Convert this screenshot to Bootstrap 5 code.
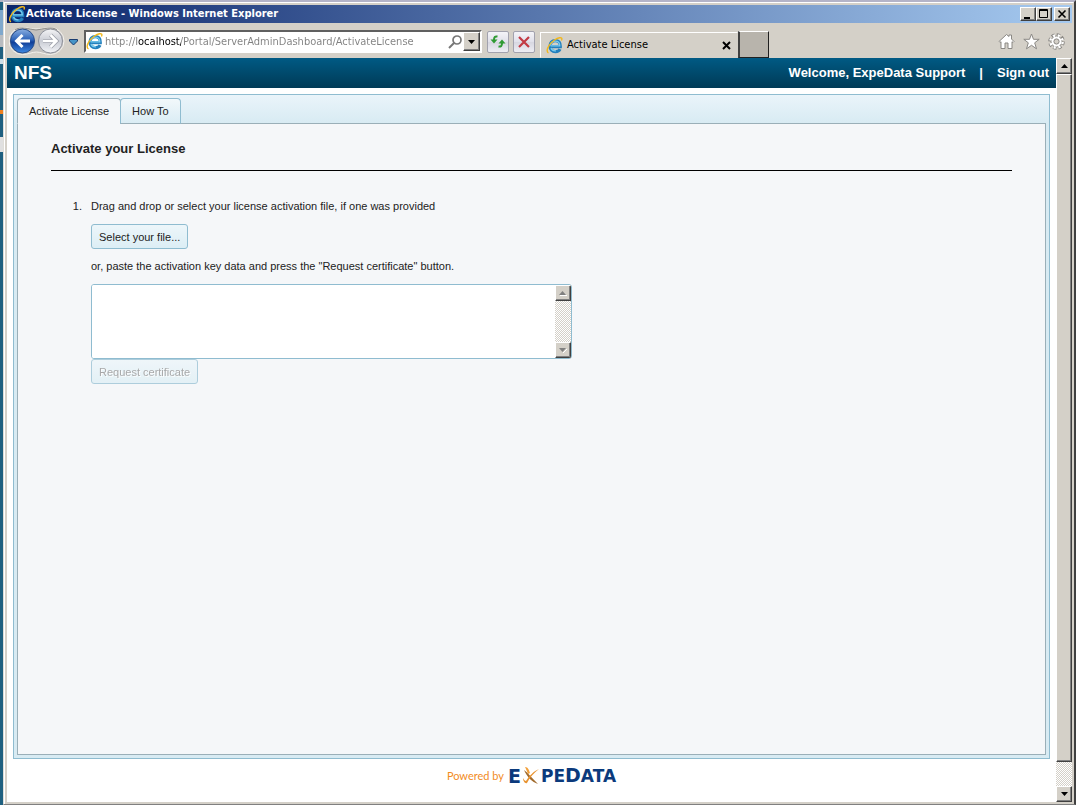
<!DOCTYPE html>
<html lang="en">
<head>
<meta charset="utf-8">
<meta name="viewport" content="width=device-width, initial-scale=1">
<title>Activate License</title>
<link href="https://cdn.jsdelivr.net/npm/bootstrap@5.3.0/dist/css/bootstrap.min.css" rel="stylesheet">
<script src="https://cdn.jsdelivr.net/npm/bootstrap@5.3.0/dist/js/bootstrap.bundle.min.js"></script>
<style>
  :root { --face: #d4d0c8; --line: #8fbcd0; --edge: #9aafb8; }
  body { font: 11px/16px "Liberation Sans", Arial, sans-serif; color: #222; background: var(--face); }
  button { padding: 0; border: 0; color: inherit; }
  svg { display: block; flex: none; }
  .desk { width: 3px; background: linear-gradient(#b4b4c4 2px, #1f6080 2px 10px, #7fa8cc 10px 35px, #b8bcc0 35px 47px, #1f6080 47px 59px, #cfe0e8 59px 64px, #1f6080 64px 110px, #f08020 110px 114px, #1f6080 114px 137px, #e0e0e0 137px 152px, #1f6080 152px); }
  .frame { border: solid; border-width: 2px 2px 1px 1px; border-color: #b4b4c8 #404040 #808080 #e0ded8; }
  .rim { border: solid; border-width: 1px 1px 0 1px; border-color: #fff var(--face) #808080 #fff; padding: 2px 1px 2px 2px; }
  .ui { font-family: "DejaVu Sans Condensed", "DejaVu Sans", sans-serif; font-stretch: condensed; }
  .titlebar { height: 18px; background: linear-gradient(90deg, #0a246a, #a6caf0); color: #fff; font-weight: bold; padding: 0 2px 0 1px; }
  .raised { background: var(--face); border: 1px solid; border-color: #fff #404040 #404040 #fff; box-shadow: inset -1px -1px #808080; }
  .winbtn { width: 16px; height: 14px; }
  .winclose { margin-left: 2px; }
  .toolbar { height: 35px; padding: 2px 7px 0 2px; }
  .address { width: 398px; height: 23px; background: #fff; border: 2px solid; border-color: #606060 #fff #fff #606060; }
  .url { border: 0; outline: 0; padding: 0 0 0 2px; height: 18px; color: transparent; background: linear-gradient(90deg, #808080 34px, #000 34px 78px, #808080 78px); -webkit-background-clip: text; background-clip: text; }
  .glass { width: 22px; height: 22px; border: 1px solid #a2a2ae; border-radius: 2px; background: linear-gradient(#f4f4f8, #e0e0ea 50%, #d6d6e0 50%, #eeeef4); }
  .spaced { margin-left: 5px; }
  .pagetab { width: 198px; height: 26px; border: 1px solid; border-color: #fff transparent transparent #fff; padding: 0 6px 0 5px; }
  .newtab { width: 31px; height: 27px; background: #b8b4ac; border: solid; border-width: 1px 1px 1px 2px; border-color: #fff #202020 #202020 #404040; }
  .banner { height: 30px; background: linear-gradient(#005a84, #003a56); color: #fff; font-weight: bold; padding: 0 7px; font-size: 13px; }
  .banner a { color: #fff; text-decoration: none; }
  .divider { padding: 0 14px; }
  .brand { font-size: 19px; margin: 0; font-weight: bold; line-height: 30px; }
  .dither { background: repeating-conic-gradient(#d4d0c8 0 25%, #fff 0 50%) 0 0 / 2px 2px; }
  .vbar { width: 16px; }
  .vbar button { height: 16px; flex: none; }
  .outer { margin: 6px 6px 0; border: 1px solid var(--line); background: linear-gradient(#eaf4fa, #d8ebf3 28px); padding: 3px; }
  .tabs { height: 26px; margin-bottom: -1px; position: relative; }
  .tabs button { height: 26px; border: 1px solid var(--line); border-radius: 4px 4px 0 0; background: linear-gradient(#f2f8fb, #daecf4); padding: 0 11px; }
  .tabs .active { background: #f5f7f9; border-color: var(--edge); border-bottom-color: #f5f7f9; }
  .tabs button + button { margin-left: -1px; border-bottom-color: var(--edge); }
  .panel { border: 1px solid var(--edge); background: #f5f7f9; padding: 17px 33px; }
  .panel h1 { font-size: 13px; line-height: 16px; font-weight: bold; margin: 0; padding-bottom: 13px; border-bottom: 1px solid #000; }
  .steps { margin: 27px 0 0; padding-left: 34px; }
  .steps li { padding-left: 6px; }
  .steps label { display: block; }
  .picker { margin: 10px 0 9px; }
  .soft { height: 25px; padding: 0 7px; border: 1px solid var(--line); border-radius: 3px; background: linear-gradient(#edf6fa, #dceef5); }
  .soft:disabled { opacity: .7; color: #888; text-shadow: 1px 1px #fff; }
  .keybox { max-width: 481px; height: 75px; margin-top: 10px; border: 1px solid var(--line); border-radius: 3px; background: #fff; overflow: hidden; }
  .keybox textarea { border: 0; outline: 0; resize: none; background: #fff; min-width: 0; }
  .foot { height: 43px; padding-bottom: 10px; }
  .powered { color: #f28c1e; font: 11px/16px Lato, sans-serif; }
  .logo { color: #0b3a7c; font: bold 17px/18px "DejaVu Sans", sans-serif; }
  .logo span { font-size: 19px; }
</style>
</head>
<body>
<svg width="0" height="0" class="position-absolute">
  <symbol id="ie" viewBox="0 0 17 17">
    <path d="M4.500 9.600H14.300C14.600 5.500 12.500 3.600 9.300 3.600S4 6 4 9.200s2.200 5.400 5.400 5.400c2.300 0 3.900-.9 4.600-2.500" fill="none" stroke="#2480bd" stroke-width="3.200"/>
    <path d="M4.600 8.900H13.800C13.800 5.700 12 4.100 9.300 4.100S4.800 5.900 4.500 8.500M5 11c1 2.500 3.500 3 5 2.800" fill="none" stroke="#7accef" stroke-width="1.300"/>
    <path d="M2.500 15.800C-.8 14.500 2.500 7 8.500 3 12 .7 15.800-.1 15.900 1.700c0 .6-.2 1.200-.5 1.800" fill="none" stroke="#f2b81c" stroke-width="1.400"/>
  </symbol>
</svg>
<div class="d-flex min-vh-100">
  <div class="desk"></div>
  <div class="frame flex-grow-1 d-flex">
  <div class="rim flex-grow-1 d-flex flex-column">
    <header class="ui">
      <div class="titlebar d-flex align-items-center">
        <svg width="18" height="17"><use href="#ie"/></svg>
        <span class="flex-grow-1">Activate License - Windows Internet Explorer</span>
        <button class="raised winbtn" aria-label="Minimize"><svg width="14" height="12"><path d="M3 9h6v2H3z"/></svg></button>
        <button class="raised winbtn" aria-label="Maximize"><svg width="14" height="12"><path d="M2.500 1.500h8v8h-8zM2 2.500h9" fill="none" stroke="#000"/></svg></button>
        <button class="raised winbtn winclose" aria-label="Close"><svg width="14" height="12"><path d="M3.500 2.500l7 7M10.500 2.500l-7 7" stroke="#000" stroke-width="1.600"/></svg></button>
      </div>
      <div class="toolbar d-flex align-items-center">
        <svg width="56" height="30" viewBox="0 1 56 30">
          <defs>
            <linearGradient id="bl" x2="0" y2="1"><stop offset="0" stop-color="#8aaee0"/><stop offset=".45" stop-color="#2c62b8"/><stop offset=".55" stop-color="#103e98"/><stop offset="1" stop-color="#3e8ae4"/></linearGradient>
            <linearGradient id="gr" x2="0" y2="1"><stop offset="0" stop-color="#f4f4f6"/><stop offset=".5" stop-color="#c9ccd4"/><stop offset="1" stop-color="#f4f5f8"/></linearGradient>
          </defs>
          <path d="M13.500 1.500C18 1.500 20 3 27 3s10-1.500 14.500-1.500a13.500 13.500 0 0 1 0 27C36 28.500 32 26 27.500 26S19 28.500 13.500 28.500a13.500 13.500 0 0 1 0-27z" fill="#c4c2bf" stroke="#f4f2ee"/>
          <path d="M6 4c5-4 13-1 21 0 8-1 16-4 21 0" fill="none" stroke="#8c8a86"/>
          <circle cx="13.500" cy="15" r="12" fill="url(#bl)" stroke="#284c88"/>
          <circle cx="41.500" cy="15" r="12" fill="url(#gr)" stroke="#8d909a"/>
          <path d="M21 15H8M13.500 9L7.500 15l6 6" fill="none" stroke="#fff" stroke-width="3"/>
          <path d="M34 15h13M41.500 9l6 6-6 6" fill="none" stroke="#9b9ea8" stroke-width="4"/>
          <path d="M34 15h13M41.500 9l6 6-6 6" fill="none" stroke="#fff" stroke-width="2.500"/>
        </svg>
        <button class="bg-transparent ms-1" aria-label="Recent pages"><svg width="10" height="8"><path d="M.5 1.500h8v1.500L4.500 7 .5 3z" fill="#4795c8" stroke="#1a3c70"/></svg></button>
        <div class="address spaced d-flex align-items-center">
          <svg width="17" height="17"><use href="#ie"/></svg>
          <input class="url ui flex-grow-1" type="text" aria-label="Address" value="http://localhost/Portal/ServerAdminDashboard/ActivateLicense">
          <svg width="15" height="15"><circle cx="9" cy="6" r="4" fill="none" stroke="#777" stroke-width="1.700"/><path d="M6 9l-5 5" stroke="#777" stroke-width="2"/></svg>
          <button class="raised h-100 px-1" aria-label="Show addresses"><svg width="7" height="4"><path d="M0 0h7L3.500 4z"/></svg></button>
        </div>
        <button class="glass spaced me-1" aria-label="Refresh"><svg width="20" height="20"><path d="M9.500 4.500C7 4 6 5 6 8M10.500 14.500c2.500.5 3.500-.5 3.500-3.500" fill="none" stroke="#2f9a33" stroke-width="2"/><path d="M2.500 7.500h7L6 11.500zM10.500 11.500h7L14 7.500z" fill="#2f9a33"/></svg></button>
        <button class="glass" aria-label="Stop"><svg width="20" height="20"><path d="M5 5l10 10M15 5L5 15" stroke="#c23a44" stroke-width="2.200"/></svg></button>
        <div class="pagetab spaced d-flex align-items-center align-self-end">
          <svg width="17" height="17"><use href="#ie"/></svg>
          <span class="ms-1 flex-grow-1 text-black">Activate License</span>
          <button class="bg-transparent" aria-label="Close tab"><svg width="9" height="9"><path d="M1 1l7 7M8 1L1 8" stroke="#000" stroke-width="2"/></svg></button>
        </div>
        <button class="newtab align-self-end" aria-label="New tab"></button>
        <div class="d-flex ms-auto gap-2">
          <button class="bg-transparent" aria-label="Home"><svg width="17" height="17"><path d="M1 8.500L8.500 1.500l2.500 2V2h2.500v4L16 8.500l-1 1-1-.8V15.500h-4V10H7v5.500H3V8.700l-1 .8z" fill="#fff" stroke="#8a8884"/></svg></button>
          <button class="bg-transparent" aria-label="Favorites"><svg width="17" height="17"><path d="M8.500 1l2 5.300h5.700l-4.500 3.500 1.800 6-5-3.500-5 3.500 1.800-6L.8 6.300h5.700z" fill="#fff" stroke="#8a8884"/></svg></button>
          <button class="bg-transparent" aria-label="Tools"><svg width="17" height="17"><circle cx="8.500" cy="8.500" r="6.700" fill="none" stroke="#8a8884" stroke-width="3.200" stroke-dasharray="3.300 1.960"/><circle cx="8.500" cy="8.500" r="5.500" fill="#fff" stroke="#8a8884"/><circle cx="8.500" cy="8.500" r="6.200" fill="none" stroke="#fff" stroke-width="2.400" stroke-dasharray="2.100 2.770" stroke-dashoffset="-.5"/><circle cx="8.500" cy="8.500" r="2.600" fill="#d4d0c8" stroke="#8a8884"/></svg></button>
        </div>
      </div>
    </header>
    <div class="flex-grow-1 d-flex">
      <div class="flex-grow-1 d-flex flex-column bg-white">
        <div class="banner d-flex align-items-center">
          <p class="brand flex-grow-1">NFS</p>
          <span>Welcome, ExpeData Support</span><span class="divider">|</span><a href="#">Sign out</a>
        </div>
        <main class="outer flex-grow-1 d-flex flex-column">
          <div class="tabs d-flex" role="tablist">
            <button class="active" role="tab" aria-selected="true">Activate License</button>
            <button role="tab" aria-selected="false">How To</button>
          </div>
          <section class="panel flex-grow-1">
            <h1>Activate your License</h1>
            <ol class="steps">
              <li>
                <label for="pick">Drag and drop or select your license activation file, if one was provided</label>
                <div class="picker"><button id="pick" class="soft d-block">Select your file...</button></div>
                <label for="key">or, paste the activation key data and press the "Request certificate" button.</label>
                <div class="keybox d-flex">
                  <textarea id="key" class="flex-grow-1"></textarea>
                  <div class="vbar dither d-flex flex-column justify-content-between">
                    <button class="raised d-flex align-items-center justify-content-center" aria-label="Scroll up"><svg width="8" height="5"><path d="M0 4h7L3.500 0z" fill="#808080"/><path d="M1 4.500h7" stroke="#fff"/></svg></button>
                    <button class="raised d-flex align-items-center justify-content-center" aria-label="Scroll down"><svg width="8" height="5"><path d="M4 5l4-4" stroke="#fff"/><path d="M0 0h7L3.500 4z" fill="#808080"/></svg></button>
                  </div>
                </div>
                <button class="soft d-block" disabled>Request certificate</button>
              </li>
            </ol>
          </section>
        </main>
        <footer class="foot d-flex align-items-center justify-content-center">
          <span class="powered me-1">Powered by</span>
          <div class="logo d-flex align-items-center"><span>E</span>
            <svg width="20" height="20" viewBox="0 0 18 20"><path d="M2 4c4 3 8 8 14 14-6-2-11-7-14-14z" fill="#a06a2c"/><path d="M3 1c3 0 4 3 5 6l-2 1C5 5 4 3 3 1z" fill="#f2a03a"/><path d="M17 3C12 7 8 11 5 17 3 18 1 15 1 12c1 2 2 3 3 3C7 10 12 5 17 3z" fill="#e89330"/></svg>
            <div>PE<span>D</span>ATA</div></div>
        </footer>
      </div>
      <div class="vbar dither d-flex flex-column">
        <button class="raised d-flex align-items-center justify-content-center" aria-label="Scroll page up"><svg width="7" height="4"><path d="M0 4h7L3.500 0z"/></svg></button>
        <div class="raised flex-grow-1"></div>
        <div class="py-2 mt-1 mb-1"></div>
        <button class="raised d-flex align-items-center justify-content-center" aria-label="Scroll page down"><svg width="7" height="4"><path d="M0 0h7L3.500 4z"/></svg></button>
      </div>
    </div>
  </div>
  </div>
</div>
</body>
</html>
